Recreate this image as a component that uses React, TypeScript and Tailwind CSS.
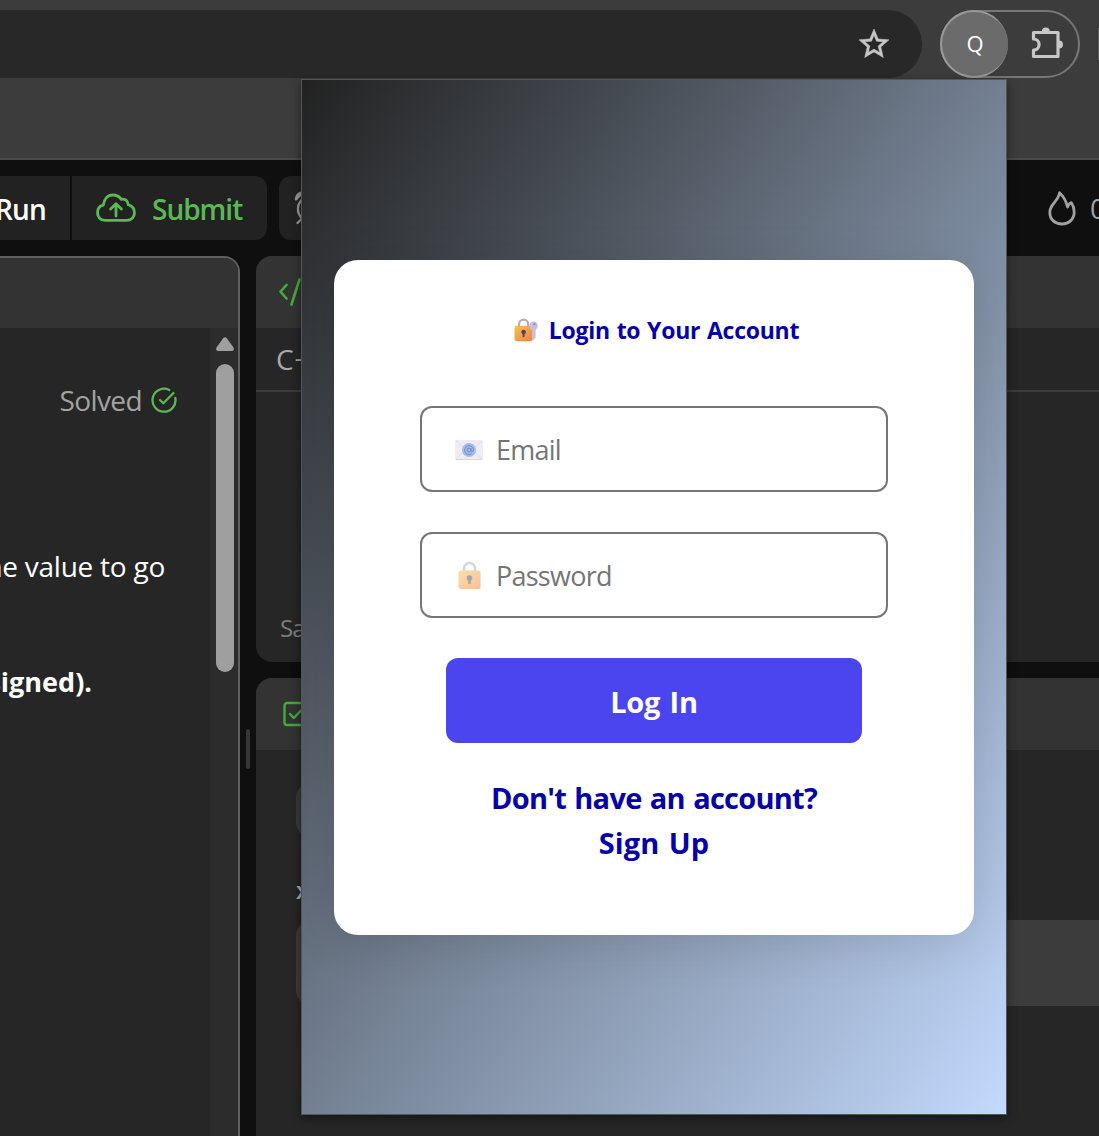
import React from "react";

const StarIcon = () => (
  <svg viewBox="0 0 24 24" className="h-9 w-9 fill-[#c7c7c7] stroke-[#c7c7c7] stroke-[0.35]">
    <path d="M22 9.24l-7.19-.62L12 2 9.19 8.63 2 9.24l5.46 4.73L5.82 21 12 17.27 18.18 21l-1.63-7.03L22 9.24zM12 15.4l-3.76 2.27 1-4.28-3.32-2.88 4.38-.38L12 6.1l1.71 4.04 4.38.38-3.32 2.88 1 4.28L12 15.4z" />
  </svg>
);

const PuzzleIcon = () => (
  <svg viewBox="0 0 34 34" className="-ml-px h-[34px] w-[34px] shrink-0">
    <path
      d="M3.500 5.500H28V29.500H3.500V23.200A5.600 5.600 0 0 0 3.500 12Z"
      fill="none"
      stroke="#c7c7c7"
      strokeWidth="3.200"
      strokeLinejoin="round"
    />
    <path d="M11.800 4.500a4 4 0 0 1 8 0ZM29 13.500a4 4 0 0 1 0 8Z" fill="#c7c7c7" />
  </svg>
);

const CloudIcon = () => (
  <svg viewBox="0 0 40 30" className="h-[30px] w-10" fill="none" stroke="#5cb854" strokeWidth="2.800" strokeLinecap="round" strokeLinejoin="round">
    <path d="M9 27.4C4.6 27.4 1.5 24 1.5 19.7c0-4.3 2.5-6.9 5.8-7.6C8 5.700 11.800 2 16.800 2c3.800 0 6.700 1.600 8.400 4.300 3.600-1 7 1.200 6.900 5.300 3.900 1.200 6.400 4.500 6.400 8.100 0 4.300-3.300 7.700-7.600 7.700Z" />
    <path d="M20 23V11M14.600 16l5.400-5.300 5.400 5.300" />
  </svg>
);

const AlarmIcon = () => (
  <svg viewBox="0 0 36 36" className="h-9 w-9 shrink-0" fill="none" stroke="#989898" strokeWidth="2.4" strokeLinecap="round">
    <circle cx="18" cy="19" r="13" />
    <path d="M18 12v8l5 3M8.500 29l-4 4M27.500 29l4 4" />
    <path d="M3 9.500C3 5 6 2.500 10 2.500Z" fill="#989898" strokeLinejoin="round" />
  </svg>
);

const FlameIcon = () => (
  <svg viewBox="0 0 28 36" className="mt-0.5 h-9 w-7 shrink-0" fill="none" stroke="#a1a1a1" strokeWidth="2.800" strokeLinejoin="round">
    <path d="M11.500 1.800C11 6 8.500 8.800 6 12 3.500 15 1.800 17.500 1.800 21.500 1.800 28.500 7 33 14 33s12.200-5 12.200-12c0-3.200-.7-6.300-2.800-9.300-2.200.6-3 2-3.900 4.300C18.300 10.500 15.500 5.500 11.500 1.800Z" />
  </svg>
);

const SolvedIcon = () => (
  <svg viewBox="0 0 26 26" className="h-[26px] w-[26px]" fill="none" stroke="#5cb854" strokeWidth="2.300" strokeLinecap="round" strokeLinejoin="round">
    <path d="M18.300 3A11.500 11.500 0 1 0 24.300 11" />
    <path d="M9 13l3.300 3.300L22.500 6" />
  </svg>
);

const CodeIcon = () => (
  <svg viewBox="0 0 40 28" className="h-7 w-10 shrink-0" fill="none" stroke="#47a93b" strokeWidth="2.600" strokeLinecap="round" strokeLinejoin="round">
    <path d="M8.500 7L2.500 13.700 8.500 20.500M21.500 1.500L13.500 26.500M27 7l6 6.700-6 6.800" />
  </svg>
);

const CheckSquareIcon = () => (
  <svg viewBox="0 0 26 26" className="h-[26px] w-[26px]" fill="none" stroke="#47a93b" strokeWidth="2.400" strokeLinecap="round" strokeLinejoin="round">
    <rect x="2.500" y="2" width="22" height="22" rx="2.500" />
    <path d="M8 13l3.800 4L19 9.500" />
  </svg>
);

const LockShape = () => (
  <>
    <defs>
      <linearGradient id="lockBody" x1="0" y1="0" x2="1" y2="1">
        <stop offset="0" stopColor="#f8c255" />
        <stop offset="1" stopColor="#ea8043" />
      </linearGradient>
    </defs>
    <path d="M6 12V7.500a5.500 5.500 0 0 1 11 0V12" fill="none" stroke="#b2aeba" strokeWidth="2.600" />
    <rect x="0.500" y="9.500" width="22" height="18.500" rx="2.500" fill="url(#lockBody)" />
    <circle cx="11.500" cy="17" r="2.800" fill="#55465a" />
    <path d="M10.300 17h2.400v6h-2.400z" fill="#55465a" />
  </>
);

const LockIcon = () => (
  <svg viewBox="0 0 23 29" className="ml-[3px] mt-0.5 h-[29px] w-[23px] opacity-50">
    <LockShape />
  </svg>
);

const LockKeyIcon = () => (
  <svg viewBox="0 0 30 29" className="h-6 w-[25px]">
    <svg width="23" height="29" viewBox="0 0 23 29">
      <LockShape />
    </svg>
    <g fill="#c9bedb">
      <circle cx="23.500" cy="9.500" r="5.200" />
      <path d="M21.500 13h4.500v11l-2.200 2.500-2.300-2.500z" />
    </g>
    <circle cx="24.500" cy="7.500" r="1.300" fill="#8d829c" />
  </svg>
);

const MailIcon = () => (
  <svg viewBox="0 0 28 20" className="mt-0.5 h-5 w-7">
    <rect width="28" height="20" rx="1.500" fill="#efecf5" />
    <path d="M1 1l9 8M27 1l-9 8M1 19l8-8M27 19l-8-8" stroke="#e3deec" strokeWidth="1" />
    <path d="M1 19.500h26" stroke="#e0cff0" strokeWidth="1" />
    <circle cx="14" cy="10" r="7" fill="#a4bce8" />
    <circle cx="14" cy="10" r="1.900" fill="none" stroke="#738dc4" strokeWidth="1" />
    <path d="M16 8v3c0 1.500 2.400 1.200 2.400-1A4.400 4.400 0 1 0 16.500 13.700" fill="none" stroke="#738dc4" strokeWidth="1" />
  </svg>
);

const BrowserBar = () => (
  <header className="flex h-40 items-start border-b-2 border-[#4a4a4a] bg-[#3c3c3c] pt-2.5">
    <div className="flex h-[68px] w-[922px] shrink-0 items-center justify-end rounded-r-full bg-[#282828] pr-[30px]">
      <StarIcon />
    </div>
    <div className="ml-[18px] flex h-[68px] w-[140px] shrink-0 items-center justify-between rounded-full border-2 border-[#777] pr-[14px]">
      <div className="-ml-0.5 flex h-[68px] w-[68px] shrink-0 items-center justify-center rounded-full border-2 border-r-0 border-[#999] bg-[#6b6b6b] pb-0.5 text-[22px] text-white">
        Q
      </div>
      <PuzzleIcon />
    </div>
    <div className="ml-[18px] mt-[18px] h-8 w-4 shrink-0 bg-[#5c5c5c]" />
  </header>
);

const Toolbar = () => (
  <div className="flex h-16 items-stretch text-[28px] font-semibold">
    <div className="mr-0.5 flex w-[70px] items-center justify-end bg-[#222] pr-6 text-white">
      <span className="mt-0.5 tracking-[-0.8px]">Run</span>
    </div>
    <div className="flex w-[195px] items-center rounded-r-xl bg-[#222] pl-6 text-[#5cb854]">
      <CloudIcon />
      <span className="ml-4 mt-0.5 tracking-[-1px]">Submit</span>
    </div>
    <div className="ml-3 flex w-16 items-center rounded-xl bg-[#222] pl-3.5">
      <AlarmIcon />
    </div>
    <div className="ml-auto flex w-[51px] shrink-0 items-center overflow-hidden font-normal text-[#a1a1a1]">
      <FlameIcon />
      <span className="ml-3.5">0</span>
    </div>
  </div>
);

const ProblemPanel = () => (
  <section className="flex w-60 shrink-0 flex-col rounded-tr-2xl border-r-2 border-t-2 border-[#606060] bg-[#262626]">
    <div className="h-[70px] shrink-0 rounded-tr-[14px] bg-[#333]" />
    <div className="flex flex-1">
      <div className="flex w-[210px] flex-col items-start overflow-hidden whitespace-nowrap text-[28px] leading-10 text-white">
        <div className="mt-[52px] flex w-[177px] items-center justify-end gap-[9px] text-[#a3a3a3]">
          <span className="tracking-[-0.6px]">Solved</span>
          <SolvedIcon />
        </div>
        <div className="mt-[126px] flex w-[165px] justify-end tracking-[-0.25px]">the value to go</div>
        <div className="mt-[76px] flex w-[92px] justify-end text-[27px] font-bold">unsigned).</div>
      </div>
      <div className="flex w-7 flex-col items-center bg-[#2c2c2c] pl-0.5 pt-[9px]">
        <svg viewBox="0 0 18 14" className="h-3.5 w-[18px]">
          <path d="M7.200 1.200Q9-.9 10.800 1.200L17.500 10.500Q18.500 14 16 14H2Q-.5 14 .5 10.500Z" fill="#9f9f9f" />
        </svg>
        <div className="mt-[13px] h-[308px] w-[18px] rounded-full bg-[#9f9f9f]" />
      </div>
    </div>
  </section>
);

const EditorColumn = () => (
  <div className="flex flex-1 flex-col gap-4">
    <section className="flex h-[406px] flex-col overflow-hidden rounded-l-2xl bg-[#262626]">
      <div className="flex h-[72px] items-center bg-[#333] pl-[22px]">
        <CodeIcon />
      </div>
      <div className="flex h-16 items-center border-b-2 border-[#3c3c3c] pl-5 text-[28px] tracking-[0.5px] text-[#a8a8a8]">C++</div>
      <div className="mt-auto pb-4 pl-6 text-2xl leading-9 tracking-[-0.8px] text-[#7c7c7c]">Saved</div>
    </section>
    <section className="flex flex-1 flex-col overflow-hidden rounded-tl-2xl bg-[#262626]">
      <div className="flex h-[72px] items-center bg-[#333] pl-[26px]">
        <CheckSquareIcon />
      </div>
      <div className="flex flex-col pl-10 pt-8">
        <div className="h-14 w-40 rounded-2xl bg-[#3a3a3a]" />
        <div className="mt-[34px] h-9 text-2xl font-semibold leading-9 text-[#b0b0b0]">x =</div>
        <div className="mt-3 h-[86px] rounded-l-2xl bg-[#3c3c3c]" />
      </div>
    </section>
  </div>
);

const Field = ({ icon, label }: { icon: React.ReactNode; label: string }) => (
  <div className="flex h-[86px] w-[468px] items-center rounded-xl border-2 border-[#767676] pl-[33px] text-[27px] text-[#757575]">
    <span className="flex w-[41px] items-center">{icon}</span>
    <span className="mt-1 tracking-[-0.75px]">{label}</span>
  </div>
);

const LoginPopup = () => (
  <div className="absolute left-[301px] top-[79px] flex h-[1036px] w-[706px] items-center justify-center border border-[#555] bg-linear-to-br from-[#222] via-[#738092] to-[#c3dafe] shadow-[0_3px_9px_rgba(0,0,0,0.45)]">
    <div className="flex h-[675px] w-[640px] flex-col items-center rounded-3xl bg-white shadow-[0_8px_48px_rgba(0,0,0,0.12)]">
      <h1 className="ml-[5px] mt-[52px] flex h-9 items-center text-[23px] font-bold text-[#0600a8]">
        <LockKeyIcon />
        <span className="ml-2.5 mt-0.5 tracking-[-0.25px] [word-spacing:1px]">Login to Your Account</span>
      </h1>
      <div className="mt-[58px] flex flex-col gap-10">
        <Field icon={<MailIcon />} label="Email" />
        <Field icon={<LockIcon />} label="Password" />
      </div>
      <button className="mt-10 h-[85px] w-[416px] rounded-xl bg-[#4b45ef] pt-1 text-[29px] font-bold tracking-[-0.2px] text-white [word-spacing:2px]">Log In</button>
      <p className="mt-8 text-center text-[29px] font-bold leading-[45px] text-[#0600a8]">
        <span className="tracking-[-0.75px] [word-spacing:1.5px]">Don't have an account?</span>
        <br />
        <span className="tracking-[0.05px] [word-spacing:2px]">Sign Up</span>
      </p>
    </div>
  </div>
);

export default function App() {
  return (
    <div className="relative flex h-[1136px] w-[1099px] flex-col overflow-hidden bg-[#0f0f0f] font-['Open_Sans','Noto_Sans',sans-serif]">
      <BrowserBar />
      <main className="flex flex-1 flex-col gap-4 pt-4">
        <Toolbar />
        <div className="flex flex-1">
          <ProblemPanel />
          <div className="flex w-4 shrink-0 items-start justify-center pt-[473px]">
            <div className="h-10 w-1 rounded-full bg-[#363636]" />
          </div>
          <EditorColumn />
        </div>
      </main>
      <LoginPopup />
    </div>
  );
}
